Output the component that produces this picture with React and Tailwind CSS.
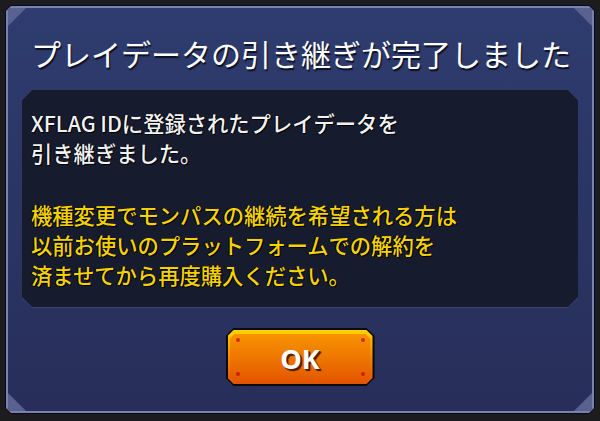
import React from 'react';

const jp = { fontFamily: '"Noto Sans CJK JP", "Noto Sans", sans-serif' };

const Corner = ({ className }) => (
  <div className={`absolute w-[18px] h-[18px] bg-[#59628f] ${className}`} />
);

const OkButton = () => (
  <div className="w-[149px] h-[58px] bg-[#0b0b0b] p-[2px] [clip-path:polygon(8px_0,calc(100%-8px)_0,100%_8px,100%_calc(100%-8px),calc(100%-8px)_100%,8px_100%,0_calc(100%-8px),0_8px)]">
    <div className="relative w-full h-full bg-gradient-to-b from-[#ffd400] via-[#f58a00] to-[#e05200] pt-[4px] px-[2px] pb-[2px] [clip-path:polygon(6px_0,calc(100%-6px)_0,100%_6px,100%_calc(100%-6px),calc(100%-6px)_100%,6px_100%,0_calc(100%-6px),0_6px)]">
      <div className="w-full h-full bg-gradient-to-b from-[#f79400] to-[#e45600] flex items-center justify-center [clip-path:polygon(5px_0,calc(100%-5px)_0,100%_5px,100%_calc(100%-5px),calc(100%-5px)_100%,5px_100%,0_calc(100%-5px),0_5px)]">
        <span
          className="text-white font-bold text-[27px] leading-none [text-shadow:1px_1px_0_#5a2000,2px_2px_1px_#3a1500]"
          style={{ fontFamily: '"Open Sans", "Noto Sans", sans-serif' }}
        >
          OK
        </span>
      </div>
      <span className="absolute left-[8px] top-[8px] w-[4px] h-[4px] rounded-full bg-[#d42a00]" />
      <span className="absolute right-[8px] top-[8px] w-[4px] h-[4px] rounded-full bg-[#d42a00]" />
      <span className="absolute left-[8px] bottom-[8px] w-[4px] h-[4px] rounded-full bg-[#c82000]" />
      <span className="absolute right-[8px] bottom-[8px] w-[4px] h-[4px] rounded-full bg-[#c82000]" />
    </div>
  </div>
);

export default function App() {
  return (
    <div className="w-[600px] h-[421px] bg-[#1c1c1f] p-[5px] overflow-hidden" style={jp}>
      <div className="h-[409px] bg-[#0a0b12] p-[1px] [clip-path:polygon(6px_0,calc(100%-6px)_0,100%_6px,100%_calc(100%-6px),calc(100%-6px)_100%,6px_100%,0_calc(100%-6px),0_6px)]">
        <div className="h-full bg-[#7782b2] p-[2px] [clip-path:polygon(5px_0,calc(100%-5px)_0,100%_5px,100%_calc(100%-5px),calc(100%-5px)_100%,5px_100%,0_calc(100%-5px),0_5px)]">
          <div className="relative h-full bg-gradient-to-b from-[#2e3c6f] to-[#282e59] flex flex-col">
            <Corner className="left-0 top-0 [clip-path:polygon(0_0,100%_0,0_100%)]" />
            <Corner className="right-0 top-0 [clip-path:polygon(0_0,100%_0,100%_100%)]" />
            <Corner className="left-0 bottom-0 [clip-path:polygon(0_0,100%_100%,0_100%)]" />
            <Corner className="right-0 bottom-0 [clip-path:polygon(100%_0,100%_100%,0_100%)]" />

            <div className="h-[82px] flex items-center pt-[8px] pl-[23px]">
              <h1 className="text-white text-[30px] leading-none whitespace-nowrap [text-shadow:1px_2px_1px_#0c1024]">
                プレイデータの引き継ぎが完了しました
              </h1>
            </div>

            <div className="mx-[14px] h-[218px] bg-[#3c4470] pb-[1px] [clip-path:polygon(10px_0,calc(100%-10px)_0,100%_10px,100%_calc(100%-10px),calc(100%-10px)_100%,10px_100%,0_calc(100%-10px),0_10px)]">
              <div className="h-full bg-[#161b2e] pt-[18px] pl-[9px] text-[21.3px] font-medium leading-[30px] [text-shadow:1px_1px_0_#000,-1px_0_0_#000] [clip-path:polygon(10px_0,calc(100%-10px)_0,100%_10px,100%_calc(100%-10px),calc(100%-10px)_100%,10px_100%,0_calc(100%-10px),0_10px)]">
                <p className="text-[#f2f2f2]">
                  XFLAG IDに登録されたプレイデータを
                  <br />
                  引き継ぎました。
                </p>
                <p className="text-[#f6d300] mt-[32px]">
                  機種変更でモンパスの継続を希望される方は
                  <br />
                  以前お使いのプラットフォームでの解約を
                  <br />
                  済ませてから再度購入ください。
                </p>
              </div>
            </div>

            <div className="flex justify-center pt-[20px]">
              <OkButton />
            </div>
          </div>
        </div>
      </div>
    </div>
  );
}
